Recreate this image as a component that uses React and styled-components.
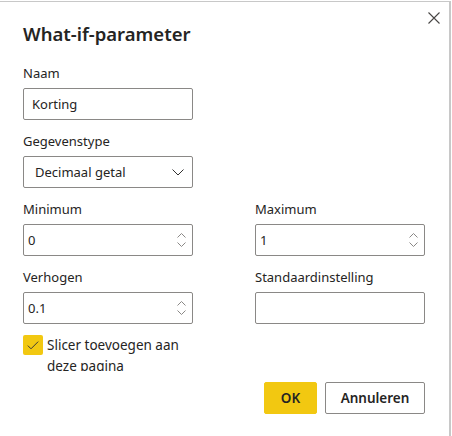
import React from "react";
import styled, { createGlobalStyle } from "styled-components";

const GlobalStyle = createGlobalStyle`
  html, body {
    margin: 0;
    padding: 0;
    background: #ffffff;
  }
  body {
    font-family: "Noto Sans", "Open Sans", sans-serif;
    color: #252423;
  }
`;

const Dialog = styled.div`
  position: relative;
  box-sizing: border-box;
  width: 451px;
  height: 436px;
  margin-top: 1px;
  border-top: 1px solid #c8c8c8;
  border-right: 2px solid #c8c8c8;
  background: #ffffff;
  display: flex;
  flex-direction: column;
`;

const CloseButton = styled.button`
  position: absolute;
  top: 8px;
  right: 7px;
  width: 16px;
  height: 16px;
  padding: 0;
  border: none;
  background: transparent;
  display: flex;
  align-items: center;
  justify-content: center;
  cursor: pointer;
`;

const Body = styled.div`
  height: 369px;
  overflow: hidden;
  padding: 0 23px;
`;

const Title = styled.h1`
  margin: 18px 0 0;
  font-size: 18.5px;
  line-height: 28px;
  font-weight: 600;
  color: #252423;
`;

const Grid = styled.div`
  display: grid;
  grid-template-columns: 170px 170px;
  column-gap: 62px;
  margin-top: 15px;
`;

const Field = styled.div`
  grid-column: ${(p) => (p.$col ? p.$col : "auto")};
  display: flex;
  flex-direction: column;
  margin-bottom: 11px;
`;

const Label = styled.label`
  font-size: 13px;
  line-height: 20px;
  color: #252423;
  margin-bottom: 5px;
`;

const Box = styled.div`
  box-sizing: border-box;
  height: 32px;
  border: 1px solid #8a8886;
  border-radius: 2px;
  display: flex;
  align-items: center;
  padding: 0 ${(p) => (p.$tight ? "4px" : "8px")};
  font-size: 13px;
  color: #252423;
`;

const Value = styled.span`
  flex: 1;
  padding-left: ${(p) => (p.$wide ? "3px" : "0")};
`;

const Spinner = styled.div`
  display: flex;
  flex-direction: column;
  gap: 4px;
  margin-right: 2px;
`;

const CheckRow = styled.div`
  grid-column: 1;
  display: flex;
  align-items: flex-start;
  gap: 4px;
`;

const CheckBox = styled.span`
  flex: none;
  width: 20px;
  height: 20px;
  border-radius: 2px;
  background: #f2c811;
  display: flex;
  align-items: center;
  justify-content: center;
`;

const CheckText = styled.span`
  font-size: 13.5px;
  line-height: 21px;
  color: #252423;
  padding-right: 8px;
`;

const Footer = styled.div`
  display: flex;
  justify-content: flex-end;
  gap: 8px;
  padding: 11px 24px 0 0;
`;

const Button = styled.button`
  box-sizing: border-box;
  height: 32px;
  min-width: ${(p) => (p.$primary ? "53px" : "100px")};
  padding: 0 12px;
  border-radius: 2px;
  border: 1px solid ${(p) => (p.$primary ? "#f2c811" : "#8a8886")};
  background: ${(p) => (p.$primary ? "#f2c811" : "#ffffff")};
  font-family: inherit;
  font-size: 13.5px;
  font-weight: 600;
  color: #252423;
`;

const Chevron = ({ up }) => (
  <svg width="9" height="5" viewBox="0 0 9 5">
    <path
      d={up ? "M0.5 4.5 L4.5 0.5 L8.5 4.5" : "M0.5 0.5 L4.5 4.5 L8.5 0.5"}
      fill="none"
      stroke="#8a8886"
      strokeWidth="1"
    />
  </svg>
);

const NumberBox = ({ value }) => (
  <Box $tight>
    <Value>{value}</Value>
    <Spinner>
      <Chevron up />
      <Chevron />
    </Spinner>
  </Box>
);

export default function App() {
  return (
    <>
      <GlobalStyle />
      <Dialog>
        <CloseButton aria-label="Sluiten">
          <svg width="12" height="12" viewBox="0 0 12 12">
            <path d="M0.5 0.5 L11.5 11.5 M11.5 0.5 L0.5 11.5" stroke="#484644" strokeWidth="1.1" />
          </svg>
        </CloseButton>
        <Body>
          <Title>What-if-parameter</Title>
          <Grid>
            <Field $col="1">
              <Label>Naam</Label>
              <Box>
                <Value>Korting</Value>
              </Box>
            </Field>
            <Field $col="1">
              <Label>Gegevenstype</Label>
              <Box>
                <Value $wide>Decimaal getal</Value>
                <svg width="12" height="7" viewBox="0 0 12 7">
                  <path d="M0.5 0.5 L6 6 L11.5 0.5" fill="none" stroke="#323130" strokeWidth="1" />
                </svg>
              </Box>
            </Field>
            <Field $col="1">
              <Label>Minimum</Label>
              <NumberBox value="0" />
            </Field>
            <Field $col="2">
              <Label>Maximum</Label>
              <NumberBox value="1" />
            </Field>
            <Field $col="1">
              <Label>Verhogen</Label>
              <NumberBox value="0.1" />
            </Field>
            <Field $col="2">
              <Label>Standaardinstelling</Label>
              <Box />
            </Field>
            <CheckRow>
              <CheckBox>
                <svg width="12" height="9" viewBox="0 0 12 9">
                  <path d="M0.8 4.6 L4 7.8 L11.2 0.6" fill="none" stroke="#3b3a39" strokeWidth="1" />
                </svg>
              </CheckBox>
              <CheckText>Slicer toevoegen aan deze pagina</CheckText>
            </CheckRow>
          </Grid>
        </Body>
        <Footer>
          <Button $primary>OK</Button>
          <Button>Annuleren</Button>
        </Footer>
      </Dialog>
    </>
  );
}
